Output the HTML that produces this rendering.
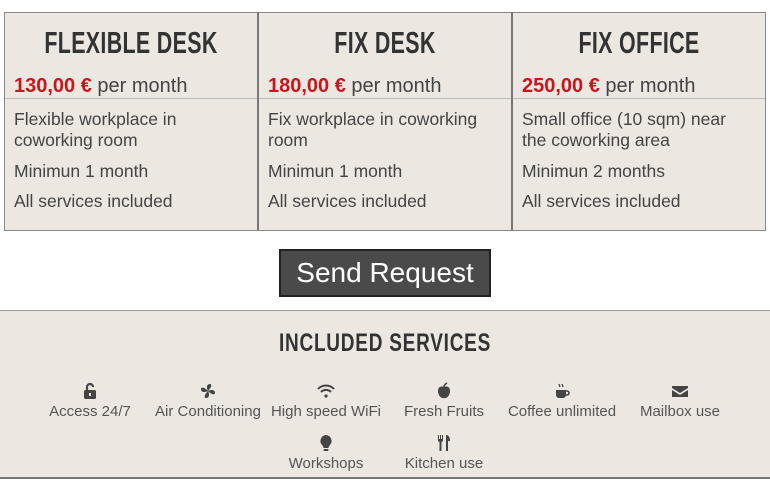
<!DOCTYPE html>
<html><head><style>
body{margin:0;width:770px;height:481px;background:#fff;font-family:"Liberation Sans",sans-serif;color:#444;position:relative;overflow:hidden}
.tbl{position:absolute;left:4px;top:12px;width:760px;height:217px;border:1px solid #888;background:#ece7e0;display:flex}
.col{flex:1;border-right:2px solid #777;position:relative}
.col:last-child{border-right:none}
.hr{position:absolute;left:0;right:0;top:85px;border-top:1px solid #bbb}
h2{margin:0;position:absolute;top:12px;left:0;right:0;text-align:center;font-weight:bold;font-size:31px;color:#333;letter-spacing:0.5px;transform:scaleX(0.69)}
.price{position:absolute;left:9px;top:62px;font-size:20px;color:#444}
.price b{color:#c8161d;font-weight:bold}
.d{position:absolute;left:9px;font-size:17.5px;line-height:21px;color:#444;width:185px}
.btn{position:absolute;left:279px;top:249px;width:208px;height:44px;background:#4a4a4a;border:2px solid #222;color:#fff;font-size:28px;text-align:center;line-height:44px}
.sec{position:absolute;left:0;top:310px;width:770px;height:166px;background:#ece7e0;border-top:1px solid #999;border-bottom:2px solid #777}
.st{position:absolute;top:18px;left:0;right:0;text-align:center;font-weight:bold;font-size:25px;letter-spacing:1px;color:#333;transform:scaleX(0.76)}
.items{position:absolute;top:70px;left:0;right:0;display:flex;flex-wrap:wrap;justify-content:center}
.it{width:118px;height:52px;text-align:center;font-size:15px;color:#555;white-space:nowrap}
.it svg{display:block;margin:0 auto 2px;width:20px;height:20px}
</style></head><body>
<div class="tbl">
<div class="col"><h2>FLEXIBLE DESK</h2><div class="price"><b>130,00 €</b> per month</div><div class="hr"></div>
<div class="d" style="top:96px">Flexible workplace in coworking room</div><div class="d" style="top:148px">Minimun 1 month</div><div class="d" style="top:178px">All services included</div></div>
<div class="col"><h2>FIX DESK</h2><div class="price"><b>180,00 €</b> per month</div><div class="hr"></div>
<div class="d" style="top:96px;width:220px">Fix workplace in coworking room</div><div class="d" style="top:148px">Minimun 1 month</div><div class="d" style="top:178px">All services included</div></div>
<div class="col"><h2>FIX OFFICE</h2><div class="price"><b>250,00 €</b> per month</div><div class="hr"></div>
<div class="d" style="top:96px;width:220px">Small office (10 sqm) near the coworking area</div><div class="d" style="top:148px">Minimun 2 months</div><div class="d" style="top:178px">All services included</div></div>
</div>
<div class="btn">Send Request</div>
<div class="sec"><div class="st">INCLUDED SERVICES</div>
<div class="items">
<div class="it"><svg viewBox="0 0 20 20"><path d="M7 9V6a3 3 0 0 1 6 0" fill="none" stroke="#444" stroke-width="2.2"/><rect x="4" y="9" width="12" height="9" rx="1.5" fill="#444"/><rect x="9" y="12" width="2" height="3" fill="#ece7e0"/></svg>Access 24/7</div>
<div class="it"><svg viewBox="0 0 20 20" fill="#444"><path d="M10 10C8 6 9 3 12 3c2 0 2 3-2 7zM10 10c4-2 7-1 7 2 0 2-3 2-7-2zM10 10c2 4 1 7-2 7-2 0-2-3 2-7zM10 10C6 12 3 11 3 8c0-2 3-2 7 2z"/></svg>Air Conditioning</div>
<div class="it"><svg viewBox="0 0 20 20" fill="none" stroke="#444" stroke-width="2"><path d="M2 8a11 11 0 0 1 16 0M5 11a7 7 0 0 1 10 0"/><circle cx="10" cy="15" r="1.6" fill="#444" stroke="none"/></svg>High speed WiFi</div>
<div class="it"><svg viewBox="0 0 20 20" fill="#444"><path d="M10 6c-2-1-6-1-6 4 0 4 3 8 6 7 3 1 6-3 6-7 0-5-4-5-6-4z"/><path d="M10 6c0-2 1-3 3-4" stroke="#444" stroke-width="1.5"/></svg>Fresh Fruits</div>
<div class="it"><svg viewBox="0 0 20 20" fill="#444"><path d="M4 9h10v5a3 3 0 0 1-3 3H7a3 3 0 0 1-3-3z"/><path d="M14 10h1a2 2 0 0 1 0 4h-1" fill="none" stroke="#444" stroke-width="1.6"/><path d="M7 3l1 3M10 3l1 3" stroke="#444" stroke-width="1.3"/></svg>Coffee unlimited</div>
<div class="it"><svg viewBox="0 0 20 20" fill="#444"><path d="M2 5h16v2l-8 5-8-5z"/><path d="M2 9l8 5 8-5v7H2z"/></svg>Mailbox use</div>
<div class="it"><svg viewBox="0 0 20 20" fill="#444"><path d="M10 2a6 6 0 0 0-4 10c1 1 1.5 2 1.5 3h5c0-1 .5-2 1.5-3a6 6 0 0 0-4-10z"/><rect x="7.5" y="16" width="5" height="2" rx="1"/></svg>Workshops</div>
<div class="it"><svg viewBox="0 0 20 20" fill="#444"><path d="M4 2v5a2 2 0 0 0 1.5 2V18h2V9A2 2 0 0 0 9 7V2H8v4H7V2H6v4H5V2z"/><path d="M12 2c3 0 4 3 4 6h-2v10h-2z"/></svg>Kitchen use</div>
</div></div>
</body></html>
